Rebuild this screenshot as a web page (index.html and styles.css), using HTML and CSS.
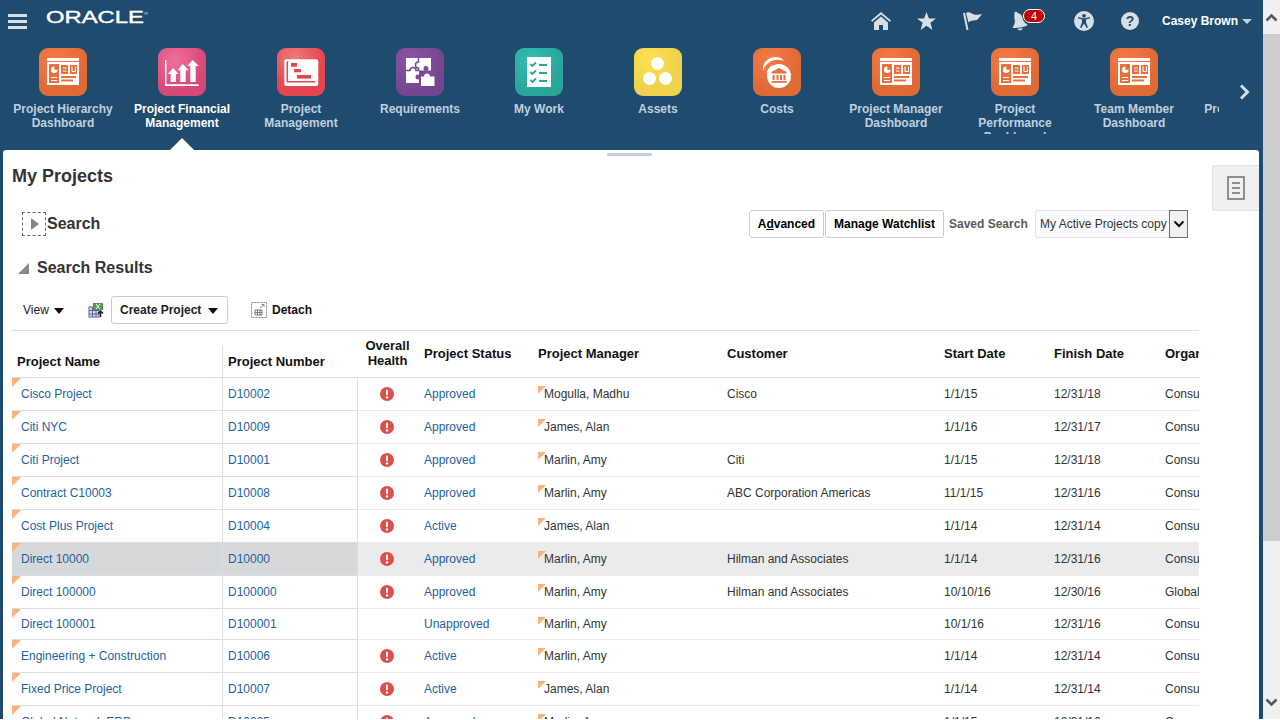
FILE: index.html
```html
<!DOCTYPE html>
<html lang="en">
    <head>
        <meta charset="utf-8">
        <title>My Projects</title>
        <link rel="stylesheet" href="styles.css">
    </head>
    <body>
    <svg class="defs" width="0" height="0">
        <symbol id="dash" viewBox="0 0 48 48">
            <rect x="8" y="10" width="32" height="3" fill="#fff"/>
            <rect x="8" y="14" width="32" height="23" fill="#fff"/>
            <rect x="10" y="16" width="10" height="19" fill="#e8703c"/>
            <path d="M15.3 21.7V18.4a3.3 3.3 0 1 0 3.3 3.3z" fill="#fff"/>
            <rect x="12" y="29" width="6" height="1" fill="#fff"/>
            <rect x="12" y="32" width="6" height="1" fill="#fff"/>
            <rect x="22" y="17" width="7" height="9" fill="#e8703c"/>
            <rect x="24" y="19.500" width="3.500" height="1" fill="#fff"/>
            <rect x="24" y="22.500" width="3.500" height="1" fill="#fff"/>
            <rect x="31" y="17" width="7" height="9" fill="#e8703c"/>
            <path d="M33 18.500v5h3.500v-5" fill="none" stroke="#fff"/>
            <rect x="22" y="28" width="15" height="2" fill="#e8703c"/>
            <rect x="22" y="31.500" width="12" height="2" fill="#e8703c"/>
        </symbol>
        <symbol id="alert" viewBox="0 0 14 14">
            <circle cx="7" cy="7" r="7" fill="#dc4f4b"/>
            <rect x="6" y="2.600" width="2" height="5.600" rx="1" fill="#fff"/>
            <circle cx="7" cy="10.400" r="1.200" fill="#fff"/>
        </symbol>
    </svg>

    <div class="window">
    <div class="app">
        <div class="topbar">
            <div class="burger"><span></span><span></span><span></span></div>
            <div class="logo">ORACLE<sup>®</sup></div>
            <div class="global">
                <span class="gicon"><svg width="20" height="18" viewBox="0 0 20 18"><path d="M10 0L0 8.500l1.200 1.300L10 2.400l8.800 7.400L20 8.500z" fill="#d6dee6"/><path d="M3 10.500L10 4.600l7 5.900V18h-5v-5H8v5H3z" fill="#d6dee6"/></svg></span>
                <span class="gicon"><svg width="19" height="18" viewBox="0 0 19 18"><path d="M9.500 0l2.400 6.500H19l-5.600 4.300 2 7.200-5.900-4.200L3.600 18l2-7.200L0 6.500h7.100z" fill="#d6dee6"/></svg></span>
                <span class="gicon"><svg width="20" height="20" viewBox="0 0 20 20"><path d="M1 2l3.500 17" stroke="#d6dee6" stroke-width="2" fill="none"/><path d="M3 2c3-2 5 .5 8 1.500 3 .8 5 0 8-.5-1.500 2-3 4-4.500 5.500-2 1.500-6 0-9 3z" fill="#d6dee6"/></svg></span>
                <span class="gicon bell"><svg class="bell-glyph" width="18" height="20" viewBox="0 0 18 20"><path d="M7 0c1 0 2 .8 2 2 3 1 4 3.500 4 6 0 3 1.500 5 4 7.500-4 1.500-11 1.500-15.500 0C3.500 13 5 11 5 8c0-2.500 0-4.500 1-6 0-1 .2-2 1-2z" fill="#d6dee6"/><path d="M6 17.500c1 2.500 4.500 2.500 5.500 0z" fill="#d6dee6"/></svg><span class="badge">4</span></span>
                <span class="gicon access"><svg width="20" height="20" viewBox="0 0 20 20"><circle cx="10" cy="10" r="10" fill="#d6dee6"/><circle cx="10" cy="4.800" r="1.900" fill="#1f4b6f"/><path d="M4 7.300l4 1.200v3L6 16.500l1.300.6L10 12.500l2.700 4.600 1.300-.6-2-5v-3l4-1.200-.3-1.200L10 7.500 4.300 6.100z" fill="#1f4b6f"/></svg></span>
                <span class="gicon"><svg width="20" height="20" viewBox="0 0 20 20"><circle cx="10" cy="10" r="9" fill="#d6dee6"/><text x="10" y="15" class="qmark">?</text></svg></span>
                <span class="user">Casey Brown</span>
                <span class="user-caret"></span>
            </div>
        </div>

        <div class="strip-row">
            <div class="strip">
                <div class="tile-item">
                    <div class="tile orange"><svg width="48" height="48"><use href="#dash"/></svg></div>
                    <div class="tile-label">Project Hierarchy Dashboard</div>
                </div>
                <div class="tile-item current">
                    <div class="tile pink"><svg width="48" height="48" viewBox="0 0 48 48">
                        <path d="M7 12h1.500v24.300H40.700V38H7z" fill="#fff"/>
                        <path d="M15.300 20l5 6H18v8h-5.300v-8H9.700z" fill="#fff"/>
                        <path d="M24.700 16l6 6.300h-3V34h-5.400V22.300h-2.600z" fill="#fff"/>
                        <path d="M34.700 12l6 6h-3v16h-5.400V18h-3z" fill="#fff"/>
                    </svg></div>
                    <div class="tile-label">Project Financial Management</div>
                </div>
                <div class="tile-item">
                    <div class="tile red"><svg width="48" height="48" viewBox="0 0 48 48">
                        <rect x="7.300" y="11.300" width="34" height="26.700" rx="2" fill="#fff"/>
                        <path d="M10.300 13.300v20.400h28" fill="none" stroke="#e5454e" stroke-width="1.500"/>
                        <rect x="14" y="15" width="6" height="3.700" fill="#e5454e"/>
                        <rect x="17" y="21" width="7" height="3.300" fill="#e5454e"/>
                        <rect x="20" y="27" width="14" height="3.600" fill="#e5454e"/>
                    </svg></div>
                    <div class="tile-label">Project Management</div>
                </div>
                <div class="tile-item">
                    <div class="tile purple"><svg width="48" height="48" viewBox="0 0 48 48">
                        <rect x="10" y="10" width="25" height="25" fill="#fff"/>
                        <rect x="23" y="22.500" width="14" height="14" fill="#7b4894"/>
                        <path d="M10 22.500h4a3 3 0 0 1 6 0h3M22.500 10v4a3 3 0 0 0 0 6v3" fill="none" stroke="#7b4894" stroke-width="1.500"/>
                        <circle cx="30" cy="20.500" r="2.500" fill="#7b4894"/>
                        <circle cx="22" cy="29" r="2.500" fill="#7b4894"/>
                        <path d="M25 28.500h3a3 3 0 0 1 6 0h4.500V38H25z" fill="#fff"/>
                    </svg></div>
                    <div class="tile-label">Requirements</div>
                </div>
                <div class="tile-item">
                    <div class="tile teal"><svg width="48" height="48" viewBox="0 0 48 48">
                        <rect x="12" y="9" width="24" height="30" fill="#fff"/>
                        <path d="M15.500 16l2 2 3.500-3.500M15.500 24l2 2 3.500-3.500M15.500 32l2 2 3.500-3.500" fill="none" stroke="#2aa59a" stroke-width="1.800"/>
                        <path d="M24 17h8M24 25h8M24 33h8" stroke="#2aa59a" stroke-width="1.800"/>
                    </svg></div>
                    <div class="tile-label">My Work</div>
                </div>
                <div class="tile-item">
                    <div class="tile yellow"><svg width="48" height="48" viewBox="0 0 48 48">
                        <circle cx="23.500" cy="15.500" r="6.500" fill="#fff"/>
                        <circle cx="15.500" cy="30.500" r="6.500" fill="#fff"/>
                        <circle cx="31.500" cy="30.500" r="6.500" fill="#fff"/>
                    </svg></div>
                    <div class="tile-label">Assets</div>
                </div>
                <div class="tile-item">
                    <div class="tile orange"><svg width="48" height="48" viewBox="0 0 48 48">
                        <path d="M10 23C8.500 15 16 8 24 9c3 .3 5.500 2 7 4-6-2.500-17-2-21 10z" fill="#fff"/>
                        <path d="M14 27c-1-5 3-10 8-10-4 2-6 5-6 10z" fill="#fff"/>
                        <circle cx="26" cy="28" r="12" fill="#fff"/>
                        <path d="M26 20l-7.500 4v1.500h15V24z" fill="#e8703c"/>
                        <path d="M20.500 27v5M24.500 27v5M28 27v5M31.500 27v5" stroke="#e8703c" stroke-width="2"/>
                        <rect x="19" y="33" width="14.500" height="1.800" fill="#e8703c"/>
                    </svg></div>
                    <div class="tile-label">Costs</div>
                </div>
                <div class="tile-item">
                    <div class="tile orange"><svg width="48" height="48"><use href="#dash"/></svg></div>
                    <div class="tile-label">Project Manager Dashboard</div>
                </div>
                <div class="tile-item">
                    <div class="tile orange"><svg width="48" height="48"><use href="#dash"/></svg></div>
                    <div class="tile-label">Project Performance Dashboard</div>
                </div>
                <div class="tile-item">
                    <div class="tile orange"><svg width="48" height="48"><use href="#dash"/></svg></div>
                    <div class="tile-label">Team Member Dashboard</div>
                </div>
                <div class="tile-item">
                    <div class="tile orange"><svg width="48" height="48"><use href="#dash"/></svg></div>
                    <div class="tile-label">Project Overview</div>
                </div>
            </div>
            <div class="strip-next"><svg width="12" height="16" viewBox="0 0 12 16"><path d="M2 1.500L8.500 8 2 14.500" fill="none" stroke="#d6dee6" stroke-width="3"/></svg></div>
        </div>
        <div class="pointer-row"><span class="pointer"></span></div>

        <div class="panel">
            <div class="main">
                <div class="grabber"></div>
                <h1 class="page-title">My Projects</h1>

                <div class="search-row">
                    <span class="disclose"><span class="tri-right"></span></span>
                    <h2 class="search-title">Search</h2>
                    <div class="search-tools">
                        <button class="btn"><span>A<u>d</u>vanced</span></button>
                        <button class="btn">Manage Watchlist</button>
                        <span class="saved-label">Saved Search</span>
                        <div class="saved-select">
                            <span class="saved-value">My Active Projects copy</span>
                            <span class="saved-arrow"><svg width="12" height="8" viewBox="0 0 12 8"><path d="M1.500 1.500L6 6l4.500-4.500" fill="none" stroke="#000" stroke-width="2"/></svg></span>
                        </div>
                    </div>
                </div>

                <div class="results-head">
                    <span class="tri-corner"></span>
                    <h2 class="results-title">Search Results</h2>
                </div>

                <div class="toolbar">
                    <span class="view-menu">View <span class="caret"></span></span>
                    <span class="excel"><svg width="16" height="16" viewBox="0 0 16 16">
                        <rect x="1" y="5" width="10" height="10" fill="#dfe0f2" stroke="#5b5ba0"/>
                        <path d="M1 8.500h10M1 12h10M4.500 5v10M8 5v10" stroke="#5b5ba0"/>
                        <rect x="5" y="1" width="10" height="7" fill="#4c9a4c"/>
                        <path d="M8 2l4 5M12 2L8 7" stroke="#fff"/>
                        <path d="M12.500 15V9.500M10 11.500l2.500-2.500 2.500 2.500" fill="none" stroke="#222" stroke-width="1.500"/>
                    </svg></span>
                    <button class="btn create">Create Project <span class="caret"></span></button>
                    <span class="detach-icon"><svg width="16" height="16" viewBox="0 0 16 16">
                        <rect x=".5" y=".5" width="15" height="15" fill="none" stroke="#888" stroke-dasharray="2 1"/>
                        <path d="M4 8h7v5H4zM4 10.500h7M6.500 8v5M9 8v5" fill="none" stroke="#777"/>
                        <path d="M9 6l4-3.500M10.500 2.500H13V5" fill="none" stroke="#888"/>
                    </svg></span>
                    <span class="detach">Detach</span>
                </div>

                <div class="grid">
                    <table>
                        <colgroup>
                            <col class="c-name"><col class="c-num"><col class="c-health"><col class="c-status">
                            <col class="c-mgr"><col class="c-cust"><col class="c-start"><col class="c-finish"><col class="c-org">
                        </colgroup>
                        <thead>
                            <tr>
                                <th class="th-name">Project Name</th>
                                <th class="th-num">Project Number</th>
                                <th class="th-health">Overall Health</th>
                                <th class="th-top">Project Status</th>
                                <th class="th-top">Project Manager</th>
                                <th class="th-top">Customer</th>
                                <th class="th-top">Start Date</th>
                                <th class="th-top">Finish Date</th>
                                <th class="th-top">Organization</th>
                            </tr>
                        </thead>
                        <tbody>
                            <tr><td class="name"><a>Cisco Project</a></td><td class="num"><a>D10002</a></td><td class="health"><svg width="14" height="14"><use href="#alert"/></svg></td><td><a>Approved</a></td><td class="mgr">Mogulla, Madhu</td><td>Cisco</td><td>1/1/15</td><td>12/31/18</td><td>Consulting</td></tr>
                            <tr><td class="name"><a>Citi NYC</a></td><td class="num"><a>D10009</a></td><td class="health"><svg width="14" height="14"><use href="#alert"/></svg></td><td><a>Approved</a></td><td class="mgr">James, Alan</td><td></td><td>1/1/16</td><td>12/31/17</td><td>Consulting</td></tr>
                            <tr><td class="name"><a>Citi Project</a></td><td class="num"><a>D10001</a></td><td class="health"><svg width="14" height="14"><use href="#alert"/></svg></td><td><a>Approved</a></td><td class="mgr">Marlin, Amy</td><td>Citi</td><td>1/1/15</td><td>12/31/18</td><td>Consulting</td></tr>
                            <tr><td class="name"><a>Contract C10003</a></td><td class="num"><a>D10008</a></td><td class="health"><svg width="14" height="14"><use href="#alert"/></svg></td><td><a>Approved</a></td><td class="mgr">Marlin, Amy</td><td>ABC Corporation Americas</td><td>11/1/15</td><td>12/31/16</td><td>Consulting</td></tr>
                            <tr><td class="name"><a>Cost Plus Project</a></td><td class="num"><a>D10004</a></td><td class="health"><svg width="14" height="14"><use href="#alert"/></svg></td><td><a>Active</a></td><td class="mgr">James, Alan</td><td></td><td>1/1/14</td><td>12/31/14</td><td>Consulting</td></tr>
                            <tr class="selected"><td class="name"><a>Direct 10000</a></td><td class="num"><a>D10000</a></td><td class="health"><svg width="14" height="14"><use href="#alert"/></svg></td><td><a>Approved</a></td><td class="mgr">Marlin, Amy</td><td>Hilman and Associates</td><td>1/1/14</td><td>12/31/16</td><td>Consulting</td></tr>
                            <tr><td class="name"><a>Direct 100000</a></td><td class="num"><a>D100000</a></td><td class="health"><svg width="14" height="14"><use href="#alert"/></svg></td><td><a>Approved</a></td><td class="mgr">Marlin, Amy</td><td>Hilman and Associates</td><td>10/10/16</td><td>12/30/16</td><td>Global</td></tr>
                            <tr class="short"><td class="name"><a>Direct 100001</a></td><td class="num"><a>D100001</a></td><td class="health"></td><td><a>Unapproved</a></td><td class="mgr">Marlin, Amy</td><td></td><td>10/1/16</td><td>12/31/16</td><td>Consulting</td></tr>
                            <tr><td class="name"><a>Engineering + Construction</a></td><td class="num"><a>D10006</a></td><td class="health"><svg width="14" height="14"><use href="#alert"/></svg></td><td><a>Active</a></td><td class="mgr">Marlin, Amy</td><td></td><td>1/1/14</td><td>12/31/14</td><td>Consulting</td></tr>
                            <tr><td class="name"><a>Fixed Price Project</a></td><td class="num"><a>D10007</a></td><td class="health"><svg width="14" height="14"><use href="#alert"/></svg></td><td><a>Active</a></td><td class="mgr">James, Alan</td><td></td><td>1/1/14</td><td>12/31/14</td><td>Consulting</td></tr>
                            <tr><td class="name"><a>Global Network ERP</a></td><td class="num"><a>D10005</a></td><td class="health"><svg width="14" height="14"><use href="#alert"/></svg></td><td><a>Approved</a></td><td class="mgr">Marlin, Amy</td><td></td><td>1/1/15</td><td>12/31/16</td><td>Consulting</td></tr>
                        </tbody>
                    </table>
                </div>
            </div>
            <div class="side">
                <div class="side-tab"><svg width="18" height="24" viewBox="0 0 18 24"><rect x="1" y="1" width="16" height="22" fill="none" stroke="#8a9096" stroke-width="2"/><path d="M5 7h8M5 12h8M5 17h8" stroke="#8a9096" stroke-width="2"/></svg></div>
            </div>
        </div>
    </div>
    <div class="scrollbar">
        <div class="sb-btn"><svg width="13" height="9" viewBox="0 0 13 9"><path d="M1.500 7.500l5-5 5 5" fill="none" stroke="#555" stroke-width="2.500"/></svg></div>
        <div class="sb-thumb"></div>
        <div class="sb-track"></div>
        <div class="sb-btn"><svg width="13" height="9" viewBox="0 0 13 9"><path d="M1.500 1.500l5 5 5-5" fill="none" stroke="#555" stroke-width="2.500"/></svg></div>
    </div>
    </div>
    </body>
</html>
```

FILE: styles.css
```css
*{box-sizing:border-box;}
html,body{margin:0; padding:0; height:720px; overflow:hidden;}
body{font-family:"Liberation Sans",Arial,sans-serif; font-size:12px; color:#333; background:#fff;}
h1,h2{margin:0;}
.defs{display:block; position:absolute;}

.window{display:flex; width:1280px; height:719px; overflow:hidden;}
.app{width:1263px; height:719px; background:#1f4b6f; display:flex; flex-direction:column;}

/* top bar */
.topbar{display:flex; align-items:center; height:42px; flex:none;}
.burger{width:19px; margin-left:8px; display:flex; flex-direction:column; gap:3px;}
.burger span{display:block; height:3px; background:#d6dee6;}
.logo{margin-left:19px; width:100px; color:#fff; font-size:17px; line-height:16px; -webkit-text-stroke:.4px #fff; transform:scaleX(1.4); transform-origin:left center; margin-top:-6px;}
.logo sup{font-size:4px; vertical-align:top; line-height:8px; -webkit-text-stroke:0;}
.global{margin-left:auto; display:flex; align-items:center;}
.gicon{width:46px; height:24px; display:flex; align-items:center; justify-content:center; position:relative;}
.gicon.bell{width:46px; margin-right:19px;}
.bell-glyph{transform:rotate(-10deg);}
.qmark{font:bold 14px "Liberation Sans",sans-serif; fill:#1f4b6f; text-anchor:middle;}
.badge{position:absolute; left:27px; top:0; width:22px; height:14px; border-radius:7px; background:#c00000; border:1px solid #fff; color:#fff; font-size:11px; line-height:12px; text-align:center;}
.user{margin-left:9px; color:#fff; font-weight:bold;}
.user-caret{margin:1px 11px 0 4px; width:0; height:0; border-left:5px solid transparent; border-right:5px solid transparent; border-top:5px solid #c5d0da;}

/* springboard */
.strip-row{display:flex; flex:none; height:92px;}
.strip{width:1219px; height:92px; padding:6px 0 0 3.5px; display:flex; overflow:hidden;}
.tile-item{flex:none; width:119px; display:flex; flex-direction:column; align-items:center;}
.tile{width:48px; height:48px; border-radius:9px; flex:none;}
.tile svg{display:block;}
.tile-label{margin-top:6px; padding:0 9px; text-align:center; font-weight:bold; line-height:14px; color:#bfd0df;}
.current .tile-label{color:#fff;}
.orange{background:radial-gradient(circle at 35% 25%,#f47a45,#df6a37 65%);}
.pink{background:radial-gradient(circle at 35% 25%,#ee709a,#d84876 65%);}
.red{background:radial-gradient(circle at 35% 20%,#ee7a7a,#e5454e 60%);}
.purple{background:radial-gradient(circle at 30% 25%,#8b55a5,#764590 65%);}
.teal{background:radial-gradient(circle at 35% 25%,#33bdb0,#2aa59a 65%);}
.yellow{background:radial-gradient(circle at 35% 25%,#ffe04f,#efd24b 60%);}
.strip-next{flex:1; display:flex; justify-content:center; padding:42px 0 0 8px;}
.strip-next svg{display:block;}
.pointer-row{height:16px; flex:none; display:flex; align-items:flex-end; padding-left:170px;}
.pointer{width:0; height:0; border-left:12.5px solid transparent; border-right:12.5px solid transparent; border-bottom:12px solid #fff;}

/* content panel */
.panel{margin:0 4px 0 3px; height:569px; background:#fff; border-radius:3px 3px 0 0; display:flex; overflow:hidden; flex:none;}
.main{width:1196px; padding-left:9px; flex:none;}
.grabber{width:45px; height:3px; margin:3px 0 0 595px; background:#c8cede; border-radius:2px;}
.page-title{margin-top:10px; font-size:18px; line-height:20px; color:#333;}

.search-row{display:flex; align-items:center; margin-top:24px; height:28px;}
.disclose{width:24px; height:24px; margin-left:10px; border:1px dashed #666; display:flex; align-items:center; justify-content:center; flex:none;}
.tri-right{width:0; height:0; border-top:6.5px solid transparent; border-bottom:6.5px solid transparent; border-left:8px solid #85898d; margin-left:2px;}
.search-title{font-size:16px; line-height:20px; margin-left:1px;}
.search-tools{margin-left:auto; margin-right:11px; display:flex; align-items:center;}
.btn{height:28px; padding:0 8px; border:1px solid #c4ced7; border-radius:3px; background:#fff; font:bold 12px "Liberation Sans",Arial,sans-serif; color:#000; margin-right:1px;}
.saved-label{width:78px; margin:0 8px 0 4px; font-weight:bold; color:#5a5a5a; white-space:nowrap;}
.saved-select{width:153px; height:28px; border:1px solid #dfe4ea; background:#fbfcfe; display:flex; align-items:center; padding-left:4px; border-radius:2px;}
.saved-value{flex:1; color:#333; white-space:nowrap;}
.saved-arrow{width:19px; height:28px; margin:-1px -1px -1px 0; flex:none; background:#f0f0f0; border:1px solid #707070; display:flex; align-items:center; justify-content:center;}

.results-head{display:flex; align-items:center; margin-top:20px; height:20px;}
.tri-corner{width:0; height:0; margin-left:6px; border-left:11px solid transparent; border-bottom:11px solid #85898d;}
.results-title{margin-left:8px; font-size:16px; line-height:20px;}

.toolbar{display:flex; align-items:center; height:28px; margin-top:18px; color:#222;}
.view-menu{margin-left:11px; width:65px;}
.caret{display:inline-block; width:0; height:0; margin-left:2px; border-left:5px solid transparent; border-right:5px solid transparent; border-top:6px solid #111; vertical-align:0;}
.excel{width:23px; display:flex;}
.excel svg{display:block;}
.btn.create{width:117px; color:#222; white-space:nowrap; text-align:left;}
.btn.create .caret{margin-left:3px;}
.detach-icon{margin-left:22px; display:flex;}
.detach{margin-left:5px; font-weight:bold; color:#111;}

/* table */
.grid{width:1187px; margin-top:6px; border-top:1px solid #d6dfe6; overflow:hidden; height:389px;}
table{border-collapse:separate; border-spacing:0; table-layout:fixed; width:1246px;}
.c-name{width:210px;}
.c-num{width:135px;}
.c-health{width:60px;}
.c-status{width:114px;}
.c-mgr{width:189px;}
.c-cust{width:217px;}
.c-start{width:110px;}
.c-finish{width:111px;}
.c-org{width:100px;}
th{height:47px; padding:0 7px; text-align:left; font-size:13px; font-weight:bold; color:#111; border-bottom:1px solid #d6dfe6; line-height:15px; white-space:nowrap;}
.th-name{padding:15px 0 0 5px;}
.th-num{padding:15px 0 0 6px; position:relative;}
.th-num::before{content:""; position:absolute; left:0; top:15px; bottom:0; border-left:1px solid #d6dfe6;}
.th-health{padding:0 0 2px 1px; text-align:center; white-space:normal;}
.th-top{padding-bottom:2px; vertical-align:middle;}
td{height:33px; padding:0 7px; border-bottom:1px solid #d6dfe6; white-space:nowrap; overflow:hidden; color:#333;}
tr.short td{height:31px;}
td a{color:#245f9f;}
td.name{padding-left:9px; position:relative;}
td.name::before{content:""; position:absolute; left:0; top:0; border-top:9px solid #fbb27b; border-right:9px solid transparent;}
td.num{padding-left:5px; border-left:1px solid #d6dfe6;}
td.health{padding:0 0 0 22px; border-left:1px solid #d6dfe6;}
td.health svg{display:block;}
td.mgr{position:relative; padding-left:13px;}
td.mgr::before{content:""; position:absolute; left:7px; top:8px; border-top:8px solid #fbb27b; border-right:8px solid transparent;}
tbody td:nth-child(n+3){border-bottom-color:#ececec;}
.selected td{background:#e9ebed;}
.selected td.name,.selected td.num{background:#d6d8da;}

/* side tab */
.side{flex:1;}
.side-tab{margin:15px 0 0 13px; height:46px; background:#f0f0f0; border:1px solid #e4e4e4; border-right:0; border-radius:3px 0 0 3px; display:flex; align-items:center; justify-content:center;}

/* scrollbar */
.scrollbar{width:17px; height:719px; background:#f0f0f0; display:flex; flex-direction:column; flex:none;}
.sb-btn{height:34px; display:flex; align-items:center; justify-content:center; flex:none;}
.sb-thumb{height:507px; background:#cdcdcd; flex:none;}
.sb-track{flex:1;}
```
